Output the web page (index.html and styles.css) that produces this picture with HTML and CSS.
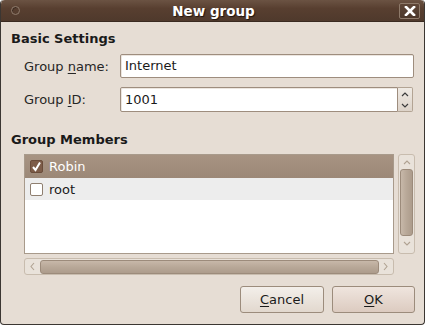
FILE: index.html
```html
<!DOCTYPE html>
<html>
<head>
<meta charset="utf-8">
<link rel="stylesheet" href="styles.css">
</head>
<body>
<div class="window">
  <div class="titlebar">
    <div class="tb-left"><span class="menu-dot"></span></div>
    <span class="title">New group</span>
    <div class="tb-right">
      <span class="close">
        <svg width="12" height="10" viewBox="0 0 12 10"><path d="M2 1 L10 9 M10 1 L2 9" stroke="#fff" stroke-width="2.6" stroke-linecap="square"/></svg>
      </span>
    </div>
  </div>
  <div class="content">
    <div class="heading">Basic Settings</div>
    <div class="form">
      <label class="label">Group <u>n</u>ame:</label>
      <div class="entry">Internet</div>
      <label class="label">Group <u>I</u>D:</label>
      <div class="spin">
        <div class="entry spin-entry">1001</div>
        <div class="spin-btns">
          <svg width="14" height="25" viewBox="0 0 14 25"><path d="M4 8 L7 5 L10 8" fill="none" stroke="#3c3c3c" stroke-width="1.2"/><path d="M4 16 L7 19 L10 16" fill="none" stroke="#3c3c3c" stroke-width="1.2"/></svg>
        </div>
      </div>
    </div>
    <div class="heading heading2">Group Members</div>
    <div class="scrolled">
      <div class="list">
        <div class="row selected"><span class="check checked"><svg width="11" height="11" viewBox="0 0 11 11"><path d="M2 6 L4.5 9 L9 1.5" fill="none" stroke="#fff" stroke-width="2"/></svg></span>Robin</div>
        <div class="row odd"><span class="check"></span>root</div>
      </div>
      <div class="vscroll">
        <svg class="arrow" width="14" height="14" viewBox="0 0 14 14"><path d="M4 9 L7 6 L10 9" fill="none" stroke="#b0a292" stroke-width="1.1"/></svg>
        <div class="vthumb"></div>
        <svg class="arrow" width="14" height="14" viewBox="0 0 14 14"><path d="M4 5 L7 8 L10 5" fill="none" stroke="#b0a292" stroke-width="1.1"/></svg>
      </div>
      <div class="hscroll">
        <svg class="harrow" width="14" height="15" viewBox="0 0 14 15"><path d="M9 4 L6 7.5 L9 11" fill="none" stroke="#b0a292" stroke-width="1.1"/></svg>
        <div class="hthumb"></div>
        <svg class="harrow" width="14" height="15" viewBox="0 0 14 15"><path d="M5 4 L8 7.5 L5 11" fill="none" stroke="#b0a292" stroke-width="1.1"/></svg>
      </div>
    </div>
    <div class="buttons">
      <div class="btn"><u>C</u>ancel</div>
      <div class="btn"><u>O</u>K</div>
    </div>
  </div>
</div>
</body>
</html>
```

FILE: styles.css
```css
* { box-sizing: border-box; }
html, body { margin: 0; padding: 0; background: #ffffff; }
body { width: 426px; height: 326px; overflow: hidden; font-family: "DejaVu Sans", sans-serif; font-size: 13px; color: #1a1a1a; }

.window {
  width: 425px;
  height: 325px;
  background: #e6ddd4;
  border: 1px solid #3b3632;
  border-top: none;
  border-radius: 4px;
  display: flex;
  flex-direction: column;
  overflow: hidden;
}

.titlebar {
  height: 22px;
  flex: none;
  background: linear-gradient(#6b5343, #583f30 40%, #4f392c);
  border-bottom: 1px solid #3a2a20;
  display: grid;
  grid-template-columns: 1fr auto 1fr;
  align-items: center;
  border-radius: 4px 4px 0 0;
}
.tb-left { display: flex; align-items: center; }
.tb-right { display: flex; justify-content: flex-end; align-items: center; }
.menu-dot {
  width: 9px; height: 9px;
  margin-left: 10px;
  border-radius: 50%;
  border: 1px solid #8f7b6c;
  box-shadow: inset 1px 1px 0 #3d2c22;
}
.title {
  text-align: center;
  color: #ffffff;
  font-weight: bold;
  font-size: 13.5px;
  text-shadow: 1px 1px 1px #1f140e;
  padding-left: 2px;
}
.close {
  width: 21px; height: 16px;
  margin-right: 4px;
  border: 1px solid #8e7a6a;
  border-radius: 2px;
  background: linear-gradient(#5e4637, #4c372a);
  display: flex; align-items: center; justify-content: center;
}

.content {
  flex: 1;
  padding: 9px 10px 0 10px;
  display: flex;
  flex-direction: column;
}
.heading { font-weight: bold; line-height: 16px; }
.heading2 { margin-top: 20px; }

.form {
  margin-top: 7px;
  padding-left: 13px;
  display: grid;
  grid-template-columns: 96px 294px;
  row-gap: 9px;
  align-items: center;
}
.label { color: #262626; }
.entry {
  height: 24px;
  background: #ffffff;
  border: 1px solid #9e8d7e;
  border-radius: 2px;
  padding: 0 4px;
  line-height: 22px;
  box-shadow: inset 1px 1px 0 #ece6e0;
}
.spin { display: flex; height: 25px; width: 293px; }
.spin-entry { flex: 1; height: 25px; line-height: 23px; border-radius: 2px 0 0 2px; }
.spin-btns {
  width: 15px;
  border: 1px solid #b3a494;
  border-left: none;
  border-radius: 0 2px 2px 0;
  background: linear-gradient(#efeae4, #ddd3c9);
  display: flex;
}

.scrolled {
  margin-top: 6px;
  margin-left: 13px;
  width: 391px;
  display: grid;
  grid-template-columns: 370px 17px;
  grid-template-rows: 100px 17px;
  column-gap: 4px;
  row-gap: 4px;
}
.list {
  background: #ffffff;
  border: 1px solid #a89a8b;
}
.row {
  height: 22px;
  display: flex;
  align-items: center;
  padding-left: 5px;
  gap: 6px;
}
.selected {
  background: linear-gradient(#a79382, #9c8877);
  color: #ffffff;
  height: 23px;
}
.odd { background: #ededed; color: #1a1a1a; }
.check {
  width: 13px; height: 13px;
  border: 1px solid #8f7f70;
  border-radius: 2px;
  background: #ffffff;
  display: flex; align-items: center; justify-content: center;
}
.checked { background: #7d5c48; border-color: #6a4c3a; }

.vscroll {
  border: 1px solid #c8bcae;
  border-radius: 3px;
  background: #e9e2da;
  display: flex;
  flex-direction: column;
  align-items: center;
}
.arrow { flex: none; }
.vthumb {
  width: 13px;
  height: 67px;
  border: 1px solid #9c8b7b;
  border-radius: 3px;
  background: linear-gradient(90deg, #c7b8a9, #b8a898 50%, #ad9c8c);
}
.vscroll .arrow:last-child { margin-top: auto; margin-bottom: 2px; }

.hscroll {
  border: 1px solid #c8bcae;
  border-radius: 3px;
  background: #e9e2da;
  display: flex;
  align-items: center;
}
.harrow { flex: none; }
.hthumb {
  width: 340px;
  height: 14px;
  border: 1px solid #9c8b7b;
  border-radius: 3px;
  background: linear-gradient(#c7b8a9, #b8a898 50%, #ad9c8c);
  margin-left: 1px;
}
.hscroll .harrow:last-child { margin-left: auto; }

.buttons {
  margin-top: 11px;
  display: flex;
  justify-content: flex-end;
  gap: 8px;
  margin-right: -1px;
}
.btn {
  width: 84px;
  height: 27px;
  border: 1px solid #9c8c7c;
  border-radius: 3px;
  background: linear-gradient(#f3efea, #e2d8ce);
  display: flex; align-items: center; justify-content: center;
  color: #1a1a1a;
}
.btn + .btn { width: 83px; background: linear-gradient(#efe5de, #dccbc0); }
u { text-decoration-thickness: 1px; text-underline-offset: 2px; }
```
